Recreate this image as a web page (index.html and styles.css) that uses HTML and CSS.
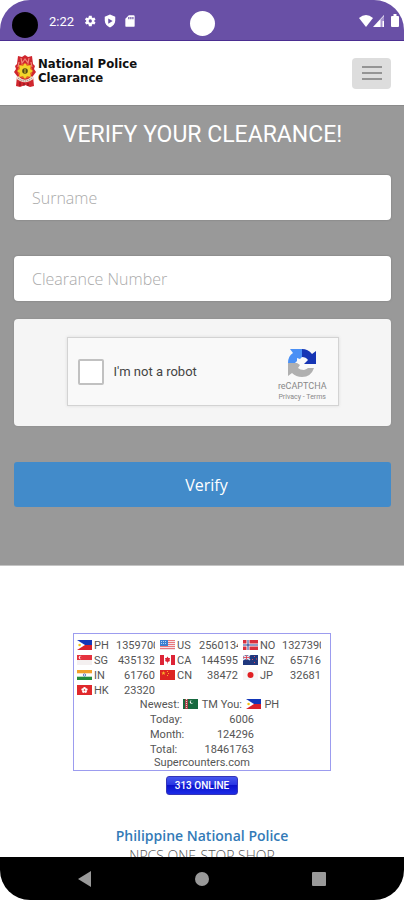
FILE: index.html
```html
<!DOCTYPE html>
<html lang="en">
<head>
<meta charset="utf-8">
<meta name="viewport" content="width=device-width, initial-scale=1">
<title>National Police Clearance</title>
<link rel="stylesheet" href="styles.css">
</head>
<body>
<svg class="defs" aria-hidden="true">
  <symbol id="ph" viewBox="0 0 15 10"><path fill="#1236b8" d="M0 0h15v5H0z"/><path fill="#d8202c" d="M0 5h15v5H0z"/><path fill="#fff" d="M0 0l8 5-8 5z"/><circle cx="2.6" cy="5" r="1.3" fill="#f5c518"/></symbol>
  <symbol id="us" viewBox="0 0 15 10"><path fill="#f3e4e8" d="M0 0h15v10H0z"/><path stroke="#e8777c" d="M0 .5h15M0 2.5h15M0 4.5h15M0 6.5h15M0 8.5h15"/><path fill="#3c7fd0" d="M0 0h8v6H0z"/><path stroke="#b9d6f5" stroke-dasharray="1 1" d="M1 1.500h6M1 3.500h6"/></symbol>
  <symbol id="no" viewBox="0 0 15 10"><path fill="#d9303e" d="M0 0h15v10H0z"/><path stroke="#fff" stroke-width="3" d="M5 0v10M0 5h15"/><path stroke="#24418f" stroke-width="1" d="M5 0v10M0 5h15"/></symbol>
  <symbol id="sg" viewBox="0 0 15 10"><path fill="#f4f0f0" d="M0 0h15v10H0z"/><path fill="#e5323e" d="M0 0h15v5H0z"/><circle cx="3.500" cy="2.500" r="1.700" fill="#fff"/><circle cx="4.300" cy="2.500" r="1.500" fill="#e5323e"/></symbol>
  <symbol id="ca" viewBox="0 0 15 10"><path fill="#fff" d="M0 0h15v10H0z"/><path fill="#dd2436" d="M0 0h4v10H0zM11 0h4v10h-4zM7.500 1.500l1 1.500 1.500 0-.5 2 .5 1-2.200 1v1.500h-.6V7L5 6l.5-1L5 3h1.500z"/></symbol>
  <symbol id="nz" viewBox="0 0 15 10"><path fill="#20387e" d="M0 0h15v10H0z"/><path stroke="#e8e8f3" stroke-width="1.500" d="M0 0l7 5M7 0L0 5M3.500 0v5M0 2.500h7"/><path stroke="#d93b49" stroke-width=".8" d="M3.500 0v5M0 2.500h7"/><path fill="#e34c5a" d="M11 1h1v1h-1zM9 4h1v1H9zM13 3.500h1v1h-1zM11 7h1v1h-1z"/></symbol>
  <symbol id="in" viewBox="0 0 15 10"><path fill="#fff" d="M0 0h15v10H0z"/><path fill="#f3a02c" d="M0 0h15v3.300H0z"/><path fill="#258c3b" d="M0 6.700h15V10H0z"/><circle cx="7.500" cy="5" r="1.200" fill="none" stroke="#2b4db1" stroke-width=".7"/></symbol>
  <symbol id="cn" viewBox="0 0 15 10"><path fill="#dc2420" d="M0 0h15v10H0z"/><path fill="#f8b02a" d="M3.500 1l.6 1.500h1.500l-1.200 1 .5 1.500-1.400-.9L2 5l.5-1.500-1.200-1h1.600zM7 1h1v1H7zM8 3h1v1H8zM7 5h1v1H7z"/></symbol>
  <symbol id="jp" viewBox="0 0 15 10"><path fill="#f6f6f6" d="M0 0h15v10H0z"/><circle cx="7.500" cy="5" r="3" fill="#e01f22"/></symbol>
  <symbol id="hk" viewBox="0 0 15 10"><path fill="#e0282c" d="M0 0h15v10H0z"/><g fill="#fff"><circle cx="7.500" cy="3.200" r="1.300"/><circle cx="9.300" cy="4.500" r="1.300"/><circle cx="8.600" cy="6.600" r="1.300"/><circle cx="6.400" cy="6.600" r="1.300"/><circle cx="5.700" cy="4.500" r="1.300"/></g><circle cx="7.500" cy="5" r=".6" fill="#e0282c"/></symbol>
  <symbol id="tm" viewBox="0 0 15 10"><path fill="#17693f" d="M0 0h15v10H0z"/><path fill="#a8404a" d="M2 0h3v10H2z"/><path stroke="#e9d9c8" stroke-dasharray="1 1" d="M3.500 0v10"/><circle cx="8.500" cy="3" r="1.800" fill="#fff"/><circle cx="9.200" cy="2.600" r="1.500" fill="#17693f"/></symbol>
</svg>
<div class="phone">
  <div class="status">
    <span class="camera"></span>
    <span class="time">2:22</span>
    <svg class="status-icon" viewBox="0 0 24 24" aria-hidden="true"><path fill="#fff" fill-rule="evenodd" d="M19.400 13a7 7 0 0 0 0-2l2.100-1.700-2-3.500-2.500 1a7 7 0 0 0-1.700-1L15 3h-5l-.4 2.800a7 7 0 0 0-1.700 1l-2.500-1-2 3.500L5.500 11a7 7 0 0 0 0 2l-2.100 1.700 2 3.500 2.500-1a7 7 0 0 0 1.700 1L10 21h5l.3-2.800a7 7 0 0 0 1.700-1l2.500 1 2-3.500zM12.500 14.800a2.800 2.800 0 1 1 0-5.600 2.800 2.800 0 0 1 0 5.600z"/></svg>
    <svg class="status-icon" viewBox="0 0 24 24" aria-hidden="true"><path fill="#fff" fill-rule="evenodd" d="M12 1L3 4.500V11c0 5.500 3.800 10 9 12 5.200-2 9-6.500 9-12V4.500zM9 7.500l7.500 4.500L9 16.500z"/></svg>
    <svg class="status-icon" viewBox="0 0 24 24" aria-hidden="true"><path fill="#fff" fill-rule="evenodd" d="M10 2L4 8v12q0 2 2 2h12q2 0 2-2V4q0-2-2-2zM9 5h2v4H9zM12.500 5h2v4h-2zM16 5h2v4h-2z"/></svg>
    <span class="dot"></span>
    <svg class="signals" viewBox="0 0 41 14" aria-hidden="true"><path fill="#fff" d="M0 4Q7 -2 14 4L7 13z"/><path fill="#fff" d="M14 13L25 1v12z"/><path fill="#a795d0" d="M21.500 5.500L25 2v11h-3.500z"/><path fill="#fff" d="M23.500 7H25v6h-1.500zM32 3q0-1 1-1h1.500V0h3v2H39q1 0 1 1v9q0 1-1 1h-6q-1 0-1-1z"/></svg>
  </div>
  <header class="header">
    <a class="brand" href="#">
      <svg class="seal" viewBox="0 0 22 32" aria-hidden="true"><path fill="#d0262e" d="M4 1l4 1 3-2 3 2 4-1 1 8 2 2-1 3 2 3-3 4 1 10-4 1-5-2-5 2-4-1 1-10-3-4 2-3-1-3 2-2z"/><path fill="none" stroke="#f08b79" stroke-width="1.200" d="M7 3l1 5 3-4 3 4 1-5M3 24l3 1M16 25l3-1M5 7l-1 5M17 7l1 5"/><circle cx="11" cy="16" r="7.500" fill="#e66a24"/><path fill="#f3d62b" d="M11 8l2 3 4-1-1 4 3 2-3 2 1 4-4-1-2 3-2-3-4 1 1-4-3-2 3-2-1-4 4 1z"/><circle cx="11" cy="16" r="2.800" fill="#544b13"/><path fill="#e5c528" d="M10.500 14h1v4h-1z"/><path fill="none" stroke="#f1dfd3" stroke-width="2.500" d="M3 22q8 8 16 0"/><path fill="none" stroke="#6a4c48" stroke-width=".8" stroke-dasharray="1 1" d="M4 23q7 6 14 0"/><path stroke="#81131c" d="M6 27v4M10 28v3M14 28v3"/></svg>
      <span>National Police<br>Clearance</span>
    </a>
    <button class="menu" type="button" aria-label="Menu"><i></i><i></i><i></i></button>
  </header>
  <main class="content">
    <form class="verify">
      <h1>VERIFY YOUR CLEARANCE!</h1>
      <input class="field" type="text" aria-label="Surname" placeholder="Surname">
      <input class="field" type="text" aria-label="Clearance Number" placeholder="Clearance Number">
      <div class="panel">
        <div class="captcha">
          <input id="robot" type="checkbox">
          <label for="robot">I'm not a robot</label>
          <div class="captcha-brand">
            <svg viewBox="0 0 30 30" aria-hidden="true"><path fill="#4a90f5" d="M1 15Q1 8 6 5L3 1h12v8l-2 2-3-1v3l-2 2z"/><path fill="#1635b4" d="M15 1q6 0 10 5l4-3v13H17l4-4q-2-3-6-3z"/><path fill="#b0b0b0" d="M1 15h9l3 2-2 3q2 2 6 2 3-1 4-2h6q-3 9-12 9-6 0-10-4l-4 3z"/></svg>
            <span class="captcha-name">reCAPTCHA</span>
            <span class="captcha-links"><a href="#">Privacy</a> - <a href="#">Terms</a></span>
          </div>
        </div>
      </div>
      <button class="submit" type="submit">Verify</button>
    </form>
    <section class="stats">
      <div class="counter">
        <table class="countries">
          <tr>
            <td><svg class="flag"><use href="#ph"/></svg></td><td>PH</td><td><span class="count">1359700</span></td>
            <td><svg class="flag"><use href="#us"/></svg></td><td>US</td><td><span class="count">2560134</span></td>
            <td><svg class="flag"><use href="#no"/></svg></td><td>NO</td><td><span class="count">1327390</span></td>
          </tr>
          <tr>
            <td><svg class="flag"><use href="#sg"/></svg></td><td>SG</td><td><span class="count">435132</span></td>
            <td><svg class="flag"><use href="#ca"/></svg></td><td>CA</td><td><span class="count">144595</span></td>
            <td><svg class="flag"><use href="#nz"/></svg></td><td>NZ</td><td><span class="count">65716</span></td>
          </tr>
          <tr>
            <td><svg class="flag"><use href="#in"/></svg></td><td>IN</td><td><span class="count">61760</span></td>
            <td><svg class="flag"><use href="#cn"/></svg></td><td>CN</td><td><span class="count">38472</span></td>
            <td><svg class="flag"><use href="#jp"/></svg></td><td>JP</td><td><span class="count">32681</span></td>
          </tr>
          <tr>
            <td><svg class="flag"><use href="#hk"/></svg></td><td>HK</td><td><span class="count">23320</span></td>
          </tr>
        </table>
        <p class="newest">Newest: <svg class="flag"><use href="#tm"/></svg> TM You: <svg class="flag"><use href="#ph"/></svg> PH</p>
        <table class="totals">
          <tr><td>Today:</td><td>6006</td></tr>
          <tr><td>Month:</td><td>124296</td></tr>
          <tr><td>Total:</td><td>18461763</td></tr>
        </table>
        <a class="source" href="#">Supercounters.com</a>
      </div>
      <a class="online" href="#">313 ONLINE</a>
    </section>
    <footer class="footer">
      <a href="#">Philippine National Police</a>
      <span>NPCS ONE-STOP SHOP</span>
    </footer>
  </main>
  <nav class="nav">
    <button type="button" aria-label="Back"><svg viewBox="0 0 16 16"><path d="M1 8l13-8v16z"/></svg></button>
    <button type="button" aria-label="Home"><svg viewBox="0 0 16 16"><circle cx="8" cy="8" r="7"/></svg></button>
    <button type="button" aria-label="Recents"><svg viewBox="0 0 16 16"><rect x="1" y="1" width="14" height="14" rx="1"/></svg></button>
  </nav>
</div>
</body>
</html>
```
FILE: styles.css
```css
* { box-sizing: border-box; }
body { margin: 0; background: #fff; font-family: "Open Sans", sans-serif; }
a { color: inherit; text-decoration: none; }
button { border: 0; padding: 0; font: inherit; }
table { border-collapse: collapse; }
td { padding: 0; }
.defs { position: absolute; width: 0; height: 0; }

.phone {
  display: flex;
  flex-direction: column;
  height: 100vh;
  overflow: hidden;
  border-radius: 30px;
  background: #fff;
}

.status {
  position: relative;
  flex: none;
  display: flex;
  align-items: center;
  gap: 6px;
  height: 41px;
  padding: 2px 4px 0 12px;
  background: #6950a6;
  border-bottom: 1px solid #4b2e91;
  color: #fff;
  font: 400 13px Roboto, sans-serif;
}
.camera { width: 26px; height: 26px; margin-top: 8px; border-radius: 50%; background: #000; }
.time { margin: 0 3px 0 5px; }
.status-icon { width: 14px; height: 14px; }
.dot {
  position: absolute;
  top: 11px;
  left: 50%;
  width: 25px;
  height: 25px;
  margin-left: -12px;
  border-radius: 50%;
  background: #fff;
}
.signals { width: 41px; height: 14px; margin-left: auto; }

.header {
  flex: none;
  display: flex;
  align-items: center;
  justify-content: space-between;
  height: 65px;
  padding: 0 13px 4px 14px;
  background: #fff;
  border-bottom: 1px solid #8a8a8a;
}
.brand {
  display: flex;
  align-items: center;
  gap: 2px;
  color: #111;
  font: 700 13px/14px "DejaVu Sans Condensed", "Noto Sans", sans-serif;
}
.seal { width: 22px; height: 32px; }
.menu {
  display: flex;
  flex-direction: column;
  align-items: center;
  justify-content: center;
  gap: 4px;
  width: 39px;
  height: 31px;
  margin-top: 4px;
  border-radius: 4px;
  background: #ddd;
}
.menu i { width: 20px; height: 2px; background: #949494; }

.content { flex: 1; min-height: 0; overflow: hidden; }
.verify {
  display: flex;
  flex-direction: column;
  padding: 15px 13px 58px 14px;
  background: #999;
  border-bottom: 1px solid #c4c4c4;
}
h1 {
  margin: 0 0 26px;
  color: #fff;
  font: 400 23px/28px Roboto, sans-serif;
  text-align: center;
}
.field {
  width: 100%;
  height: 45px;
  margin-bottom: 36px;
  padding: 0 18px;
  border: 0;
  border-radius: 4px;
  background: #fff;
  box-shadow: 0 0 2px #777;
  color: #555;
  font: 300 16px "Open Sans", sans-serif;
}
.field::placeholder { color: #aaa; opacity: 1; }
.field + .field { margin-bottom: 18px; }
.panel {
  display: flex;
  justify-content: center;
  padding: 18px;
  height: 107px;
  border-radius: 4px;
  background: #f5f5f5;
  box-shadow: 0 0 2px #888;
}
.captcha {
  display: flex;
  align-items: center;
  width: 272px;
  height: 69px;
  padding: 0 11px 0 10px;
  border: 1px solid #d3d3d3;
  background: #f9f9f9;
  box-shadow: 0 0 3px #ddd;
  color: #444;
  font: 400 12px Roboto, sans-serif;
}
.captcha input {
  appearance: none;
  width: 26px;
  height: 26px;
  margin: 0 10px 0 0;
  border: 2px solid #c1c1c1;
  border-radius: 2px;
  background: #fff;
}
.captcha-brand {
  display: flex;
  flex-direction: column;
  align-items: center;
  margin-left: auto;
  padding-top: 6px;
  color: #888;
}
.captcha-brand svg { width: 30px; height: 30px; margin-bottom: 3px; }
.captcha-name { font-size: 9px; line-height: 11px; }
.captcha-links { font-size: 7px; line-height: 10px; }
.captcha label { font-size: 13px; }
.submit {
  height: 45px;
  margin-top: 36px;
  padding-left: 8px;
  border-radius: 3px;
  background: #428bca;
  color: #fff;
  font-size: 16px;
  cursor: pointer;
}

.stats {
  display: flex;
  flex-direction: column;
  align-items: center;
  gap: 5px;
  padding-top: 67px;
}
.counter {
  display: flex;
  flex-direction: column;
  align-items: center;
  width: 258px;
  padding: 4px 3px 1px;
  border: 1px solid #9c9cef;
  color: #555;
  font: 400 11px/14px Roboto, sans-serif;
}
.countries { align-self: flex-start; }
.countries tr { height: 15px; }
.countries td:nth-child(3n + 1) { width: 17px; }
.countries td:nth-child(3n + 2) { width: 22px; }
.countries td:nth-child(3n) { width: 44px; }
.flag { display: inline-block; width: 15px; height: 10px; vertical-align: -1px; }
.count { display: block; width: 39px; overflow: hidden; text-align: right; }
.newest { margin: 0; padding-left: 15px; }
.newest .flag { margin: 0 1px; }
.totals td { width: 52px; line-height: 15px; }
.totals td + td { text-align: right; }
.source { line-height: 12px; }
.online {
  width: 72px;
  height: 19px;
  border: 1px solid #3434b8;
  border-radius: 3px;
  background: linear-gradient(#4657ee, #2532e2 50%, #0b12cc 50%, #1b2be8);
  color: #fff;
  font: 500 10px/17px Roboto, sans-serif;
  text-align: center;
}

.footer {
  display: flex;
  flex-direction: column;
  align-items: center;
  margin-top: 31px;
  color: #555;
  font-size: 14px;
  font-weight: 300;
  line-height: 20px;
}
.footer a { color: #337ab7; font-weight: 600; }

.nav {
  flex: none;
  display: flex;
  justify-content: space-around;
  align-items: center;
  height: 43px;
  padding: 0 26px;
  background: #000;
}
.nav button { width: 16px; height: 16px; background: none; }
.nav svg { display: block; width: 16px; height: 16px; fill: #999; }
```
